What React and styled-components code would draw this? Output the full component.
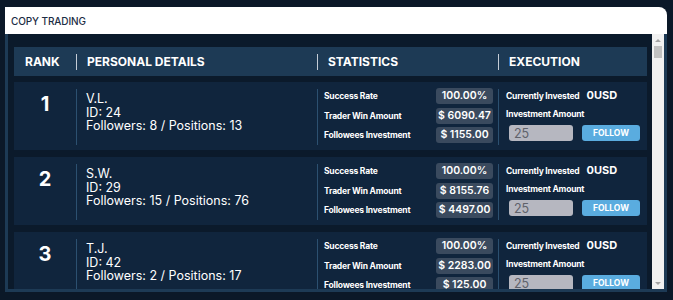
import React from "react";
import styled, { createGlobalStyle } from "styled-components";

const traders = [
  {
    rank: 1,
    name: "V.L.",
    id: 24,
    followers: 8,
    positions: 13,
    success: "100.00%",
    win: "$ 6090.47",
    invest: "$ 1155.00",
  },
  {
    rank: 2,
    name: "S.W.",
    id: 29,
    followers: 15,
    positions: 76,
    success: "100.00%",
    win: "$ 8155.76",
    invest: "$ 4497.00",
  },
  {
    rank: 3,
    name: "T.J.",
    id: 42,
    followers: 2,
    positions: 17,
    success: "100.00%",
    win: "$ 2283.00",
    invest: "$ 125.00",
  },
];

export default function App() {
  return (
    <>
      <GlobalStyle />
      <Page>
        <TitleBar>COPY TRADING</TitleBar>
        <Frame>
          <ScrollArea>
            <HeadRow>
              <HeadCell>RANK</HeadCell>
              <HeadCell>
                <HeadLabel>PERSONAL DETAILS</HeadLabel>
              </HeadCell>
              <HeadCell>
                <HeadLabel>STATISTICS</HeadLabel>
              </HeadCell>
              <HeadCell>
                <HeadLabel>EXECUTION</HeadLabel>
              </HeadCell>
            </HeadRow>
            {traders.map((t) => (
              <Row key={t.rank}>
                <Rank>{t.rank}</Rank>
                <Cell>
                  <Details>
                    <div>{t.name}</div>
                    <div>ID: {t.id}</div>
                    <div>
                      Followers: {t.followers} / Positions: {t.positions}
                    </div>
                  </Details>
                </Cell>
                <Cell>
                  <Stats>
                    <StatLabel>Success Rate</StatLabel>
                    <Pill>{t.success}</Pill>
                    <StatLabel>Trader Win Amount</StatLabel>
                    <Pill>{t.win}</Pill>
                    <StatLabel>Followees Investment</StatLabel>
                    <Pill>{t.invest}</Pill>
                  </Stats>
                </Cell>
                <Cell>
                  <Execution>
                    <Line>
                      <StatLabel>Currently Invested</StatLabel>
                      <Amount>0USD</Amount>
                    </Line>
                    <StatLabel>Investment Amount</StatLabel>
                    <Line $gap={9}>
                      <AmountInput defaultValue="25" />
                      <FollowBtn>FOLLOW</FollowBtn>
                    </Line>
                  </Execution>
                </Cell>
              </Row>
            ))}
          </ScrollArea>
          <Scrollbar>
            <Arrow />
            <Thumb />
            <Track />
            <Arrow $down />
          </Scrollbar>
        </Frame>
      </Page>
    </>
  );
}

const GlobalStyle = createGlobalStyle`
  body {
    margin: 0;
    background: #0b1828;
    font-family: Inter, "Noto Sans", sans-serif;
  }
`;

const Page = styled.div`
  width: 662px;
  padding: 7px 0 0 5px;
`;

const TitleBar = styled.div`
  height: 27px;
  display: flex;
  align-items: center;
  padding-left: 6px;
  background: #ffffff;
  border-top-right-radius: 8px;
  color: #1b2c44;
  font-size: 10px;
  font-weight: 500;
  letter-spacing: -0.1px;
`;

const Frame = styled.div`
  display: flex;
  height: 255px;
  border: 3px solid #1d3a55;
  border-top: none;
  background: #0b1a2b;
  overflow: hidden;
`;

const ScrollArea = styled.div`
  flex: 1;
  padding: 13px 5px 0 6px;
  overflow: hidden;
`;

const columns = "62px 241px 181px 149px";

const HeadRow = styled.div`
  display: grid;
  grid-template-columns: ${columns};
  height: 29px;
  align-items: center;
  background: #1d3a55;
  margin-bottom: 6px;
`;

const HeadCell = styled.div`
  color: #ffffff;
  font-size: 12px;
  font-weight: 700;
  padding-left: 11px;
  &:not(:first-child) {
    padding-left: 0;
  }
`;

const HeadLabel = styled.div`
  border-left: 1px solid #c4ccd6;
  padding-left: 10px;
  line-height: 16px;
`;

const Row = styled.div`
  display: grid;
  grid-template-columns: ${columns};
  height: 68px;
  background: #10253d;
  margin-bottom: 7px;
  padding: 7px 0 5px;
  box-sizing: border-box;
`;

const Rank = styled.div`
  color: #ffffff;
  font-size: 20px;
  font-weight: 700;
  text-align: center;
  padding-top: 3px;
`;

const Cell = styled.div`
  border-left: 1px solid #2c5070;
  height: 100%;
`;

const Details = styled.div`
  padding: 3px 0 0 9px;
  color: #ffffff;
  font-size: 12.5px;
  line-height: 13.5px;
`;

const Stats = styled.div`
  display: grid;
  grid-template-columns: 1fr 57px;
  row-gap: 3.5px;
  align-items: center;
  padding: 0 5px 0 6px;
  margin-top: -1px;
`;

const StatLabel = styled.div`
  color: #ffffff;
  font-size: 8.5px;
  line-height: 10px;
  font-weight: 700;
  letter-spacing: -0.2px;
`;

const Pill = styled.div`
  height: 16px;
  line-height: 16px;
  border-radius: 3px;
  background: #3a4a5e;
  color: #ffffff;
  font-size: 10.5px;
  font-weight: 600;
  text-align: center;
`;

const Execution = styled.div`
  display: flex;
  flex-direction: column;
  gap: 6.5px;
  padding: 0 0 0 7px;
`;

const Line = styled.div`
  display: flex;
  align-items: center;
  gap: ${(p) => p.$gap || 7}px;
`;

const Amount = styled.span`
  color: #ffffff;
  font-size: 11px;
  line-height: 13px;
  font-weight: 700;
`;

const AmountInput = styled.input`
  width: 64px;
  height: 16px;
  box-sizing: border-box;
  margin-left: 3px;
  border: none;
  border-radius: 3px;
  background: #b6b7c0;
  color: #5f626b;
  font-family: Inter, sans-serif;
  font-size: 12.5px;
  padding: 0 5px;
  &:focus {
    outline: none;
  }
`;

const FollowBtn = styled.button`
  width: 58px;
  height: 16px;
  border: none;
  border-radius: 3px;
  background: #5aacdf;
  color: #ffffff;
  font-family: Inter, sans-serif;
  font-size: 8.5px;
  font-weight: 700;
  padding: 0;
  cursor: pointer;
`;

const Scrollbar = styled.div`
  width: 12px;
  display: flex;
  flex-direction: column;
  background: #f1f1f1;
`;

const Arrow = styled.div`
  height: 12px;
  display: flex;
  align-items: center;
  justify-content: center;
  &::after {
    content: "";
    border-left: 3px solid transparent;
    border-right: 3px solid transparent;
    ${(p) =>
      p.$down
        ? "border-top: 3px solid #a3a3a3;"
        : "border-bottom: 3px solid #a3a3a3;"}
  }
`;

const Thumb = styled.div`
  height: 12px;
  margin: 0 2px;
  background: #c1c1c1;
`;

const Track = styled.div`
  flex: 1;
`;
